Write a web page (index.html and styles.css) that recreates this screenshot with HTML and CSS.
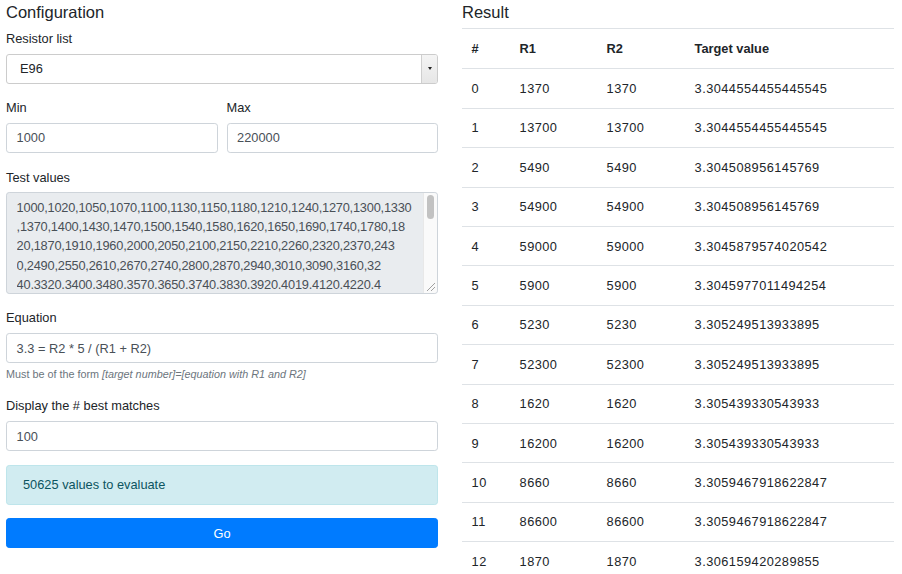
FILE: index.html
```html
<!DOCTYPE html>
<html>
<head>
<meta charset="utf-8">
<link rel="stylesheet" href="styles.css">
</head>
<body>
<div class="page">
  <section class="col">
    <h5 class="title">Configuration</h5>
    <div class="group">
      <label class="lbl">Resistor list</label>
      <div class="select">
        <span class="select-text">E96</span>
        <span class="select-btn"><span class="caret"></span></span>
      </div>
    </div>
    <div class="group row2">
      <div class="half">
        <label class="lbl">Min</label>
        <div class="input">1000</div>
      </div>
      <div class="half">
        <label class="lbl">Max</label>
        <div class="input">220000</div>
      </div>
    </div>
    <div class="group">
      <label class="lbl">Test values</label>
      <div class="textarea">
        <div class="ta-text">1000,1020,1050,1070,1100,1130,1150,1180,1210,1240,1270,1300,1330<br>,1370,1400,1430,1470,1500,1540,1580,1620,1650,1690,1740,1780,18<br>20,1870,1910,1960,2000,2050,2100,2150,2210,2260,2320,2370,243<br>0,2490,2550,2610,2670,2740,2800,2870,2940,3010,3090,3160,32<br>40,3320,3400,3480,3570,3650,3740,3830,3920,4019,4120,4220,4</div>
        <div class="sb-track"><div class="sb-thumb"></div></div>
        <svg class="grip" width="11" height="11" viewBox="0 0 11 11"><path d="M10 2 L2 10 M10 6 L6 10" stroke="#a0a0a0" stroke-width="1" fill="none"/></svg>
      </div>
    </div>
    <div class="group">
      <label class="lbl">Equation</label>
      <div class="input">3.3 = R2 * 5 / (R1 + R2)</div>
      <small class="help">Must be of the form <i>[target number]=[equation with R1 and R2]</i></small>
    </div>
    <div class="group">
      <label class="lbl">Display the # best matches</label>
      <div class="input">100</div>
    </div>
    <div class="alert">50625 values to evaluate</div>
    <button class="btn">Go</button>
  </section>
  <section class="col">
    <h5 class="title">Result</h5>
    <table class="table">
      <thead>
        <tr><th class="c-n">#</th><th class="c-r1">R1</th><th class="c-r2">R2</th><th>Target value</th></tr>
      </thead>
      <tbody>
        <tr><td>0</td><td>1370</td><td>1370</td><td>3.3044554455445545</td></tr>
        <tr><td>1</td><td>13700</td><td>13700</td><td>3.3044554455445545</td></tr>
        <tr><td>2</td><td>5490</td><td>5490</td><td>3.304508956145769</td></tr>
        <tr><td>3</td><td>54900</td><td>54900</td><td>3.304508956145769</td></tr>
        <tr><td>4</td><td>59000</td><td>59000</td><td>3.3045879574020542</td></tr>
        <tr><td>5</td><td>5900</td><td>5900</td><td>3.3045977011494254</td></tr>
        <tr><td>6</td><td>5230</td><td>5230</td><td>3.305249513933895</td></tr>
        <tr><td>7</td><td>52300</td><td>52300</td><td>3.305249513933895</td></tr>
        <tr><td>8</td><td>1620</td><td>1620</td><td>3.305439330543933</td></tr>
        <tr><td>9</td><td>16200</td><td>16200</td><td>3.305439330543933</td></tr>
        <tr><td>10</td><td>8660</td><td>8660</td><td>3.3059467918622847</td></tr>
        <tr><td>11</td><td>86600</td><td>86600</td><td>3.3059467918622847</td></tr>
        <tr><td>12</td><td>1870</td><td>1870</td><td>3.306159420289855</td></tr>
      </tbody>
    </table>
  </section>
</div>
</body>
</html>
```

FILE: styles.css
```css
* { box-sizing: border-box; }
html, body { margin: 0; padding: 0; overflow: hidden; background: #fff; }
body {
  font-family: "Liberation Sans", Arial, sans-serif;
  font-size: 12.8px;
  line-height: 19.2px;
  color: #212529;
}
.page {
  display: grid;
  grid-template-columns: 432px 432px;
  column-gap: 24px;
  padding-left: 6px;
}
.col { display: flex; flex-direction: column; }
.title {
  margin: 0 0 6px 0;
  padding-top: 2px;
  font-size: 16.5px;
  line-height: 20px;
  font-weight: 500;
  color: #212529;
}
.group { margin-bottom: 13.3px; display: flex; flex-direction: column; }
.row2 { flex-direction: row; gap: 9px; }
.half { flex: 1; display: flex; flex-direction: column; }
.lbl { display: block; padding-top: 1px; margin-bottom: 5.4px; }
.input {
  height: 30.4px;
  border: 1px solid #ced4da;
  border-radius: 3.2px;
  padding: 4.6px 9.6px;
  color: #495057;
  background: #fff;
  white-space: nowrap;
}
.select {
  height: 30.4px;
  border: 1px solid #ccc;
  border-radius: 3px;
  display: flex;
  background: #fff;
  overflow: hidden;
}
.select-text { flex: 1; padding: 4.6px 13px; color: #212529; }
.select-btn {
  width: 16px;
  background: linear-gradient(#f4f4f4, #e6e6e6);
  border-left: 1px solid #cfcfcf;
  display: flex;
  align-items: center;
  justify-content: center;
}
.caret {
  width: 0; height: 0;
  border-left: 2.5px solid transparent;
  border-right: 2.5px solid transparent;
  border-top: 3.5px solid #222;
}
.textarea {
  position: relative;
  height: 102px;
  border: 1px solid #ced4da;
  border-radius: 3.2px;
  background: #e9ecef;
  padding: 4.8px 0 0 9.6px;
  color: #495057;
}
.ta-text {
  height: 91px;
  overflow: hidden;
  white-space: nowrap;
  letter-spacing: -0.22px;
}
.sb-track {
  position: absolute;
  top: 0; right: 0; bottom: 0;
  width: 14px;
  background: #fafafa;
  border-left: 1px solid #e8e8e8;
  border-radius: 0 3px 3px 0;
}
.sb-thumb {
  position: absolute;
  top: 2px; left: 3px;
  width: 7px; height: 24px;
  border-radius: 4px;
  background: #c2c2c2;
}
.grip { position: absolute; right: 1px; bottom: 1px; }
.help {
  display: block;
  margin-top: 3.2px;
  font-size: 10.8px;
  line-height: 15.4px;
  color: #6c757d;
}
.alert {
  padding: 9.6px 16px;
  border: 1px solid #bee5eb;
  border-radius: 3.2px;
  background: #d1ecf1;
  color: #0c5460;
  margin-bottom: 12.8px;
}
.btn {
  display: block;
  width: 100%;
  height: 30.4px;
  border: 1px solid #007bff;
  border-radius: 3.2px;
  background: #007bff;
  color: #fff;
  font-family: inherit;
  font-size: 12.8px;
  line-height: 19.2px;
  padding: 4.8px 9.6px;
}
.table {
  width: 100%;
  border-collapse: collapse;
  color: #212529;
}
.table th, .table td {
  text-align: left;
  padding: 9.6px 9.6px;
  border-top: 1px solid #dee2e6;
  vertical-align: top;
  line-height: 19.2px;
  white-space: nowrap;
}
.table td { letter-spacing: 0.45px; }
.table th { font-weight: bold; border-bottom: 1px solid #dee2e6; padding-bottom: 10.6px; }
.c-n { width: 48px; }
.c-r1 { width: 87px; }
.c-r2 { width: 88px; }
```
